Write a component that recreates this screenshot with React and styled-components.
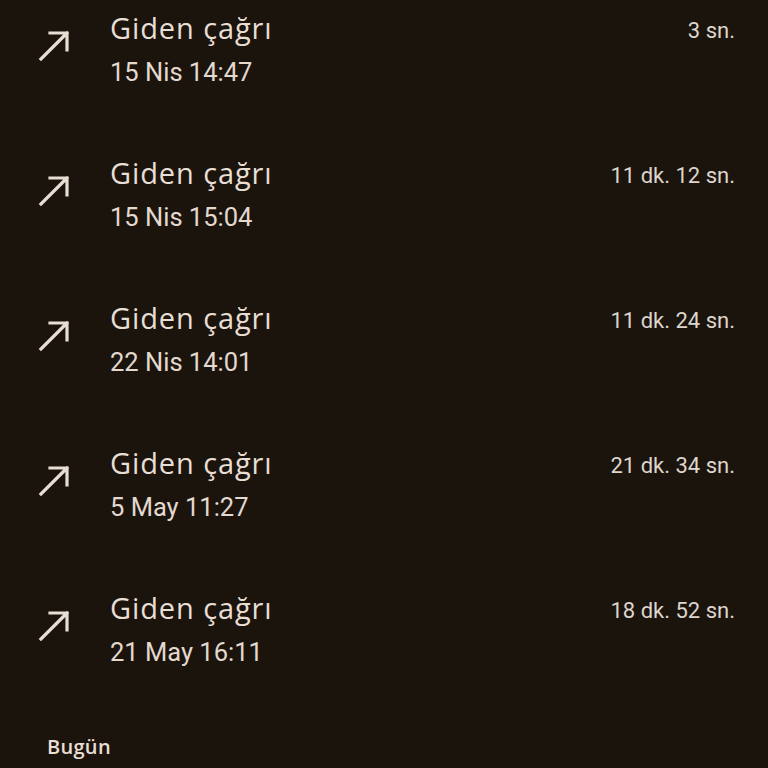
import styled, { createGlobalStyle } from "styled-components";

const GlobalStyle = createGlobalStyle`
  html, body {
    margin: 0;
    padding: 0;
    background-color: #1b140d;
  }
  body {
    font-family: Roboto, "Noto Sans", sans-serif;
    color: #e8ded4;
  }
`;

const Screen = styled.div`
  width: 768px;
  height: 768px;
  overflow: hidden;
  background-color: #1b140d;
  padding-top: 6px;
  box-sizing: border-box;
`;

const CallRow = styled.div`
  display: flex;
  align-items: flex-start;
  height: 145px;
  padding: 0 33px 0 36px;
  box-sizing: border-box;
`;

const IconBox = styled.div`
  width: 36px;
  height: 88px;
  margin-right: 38px;
  display: flex;
  align-items: center;
  justify-content: center;
  margin-top: -4px;
`;

const TextBlock = styled.div`
  flex: 1;
  display: flex;
  flex-direction: column;
`;

const Title = styled.span`
  font-family: "Open Sans", Roboto, sans-serif;
  font-size: 29px;
  line-height: 44px;
  color: #e8ded4;
  letter-spacing: 0.9px;
`;

const When = styled.span`
  font-size: 25.5px;
  line-height: 44px;
  color: #e3d9cf;
`;

const Duration = styled.span`
  font-size: 22px;
  line-height: 44px;
  padding-top: 3px;
  color: #ded5cc;
`;

const SectionLabel = styled.div`
  padding-left: 47px;
  font-family: "Open Sans", Roboto, sans-serif;
  font-size: 20px;
  font-weight: 600;
  line-height: 32px;
  letter-spacing: 0.3px;
  color: #e8ded4;
`;

const OutgoingArrow = () => (
  <svg width="36" height="36" viewBox="0 0 36 36" fill="none">
    <path
      d="M5 31 L31 5 M14 5 H31 V22"
      stroke="#e8ded4"
      strokeWidth="3.2"
      strokeLinecap="square"
      strokeLinejoin="miter"
    />
  </svg>
);

const calls = [
  { date: "15 Nis 14:47", duration: "3 sn." },
  { date: "15 Nis 15:04", duration: "11 dk. 12 sn." },
  { date: "22 Nis 14:01", duration: "11 dk. 24 sn." },
  { date: "5 May 11:27", duration: "21 dk. 34 sn." },
  { date: "21 May 16:11", duration: "18 dk. 52 sn." },
];

export default function App() {
  return (
    <>
      <GlobalStyle />
      <Screen>
        {calls.map((c) => (
          <CallRow key={c.date}>
            <IconBox>
              <OutgoingArrow />
            </IconBox>
            <TextBlock>
              <Title>Giden çağrı</Title>
              <When>{c.date}</When>
            </TextBlock>
            <Duration>{c.duration}</Duration>
          </CallRow>
        ))}
        <SectionLabel>Bugün</SectionLabel>
      </Screen>
    </>
  );
}
